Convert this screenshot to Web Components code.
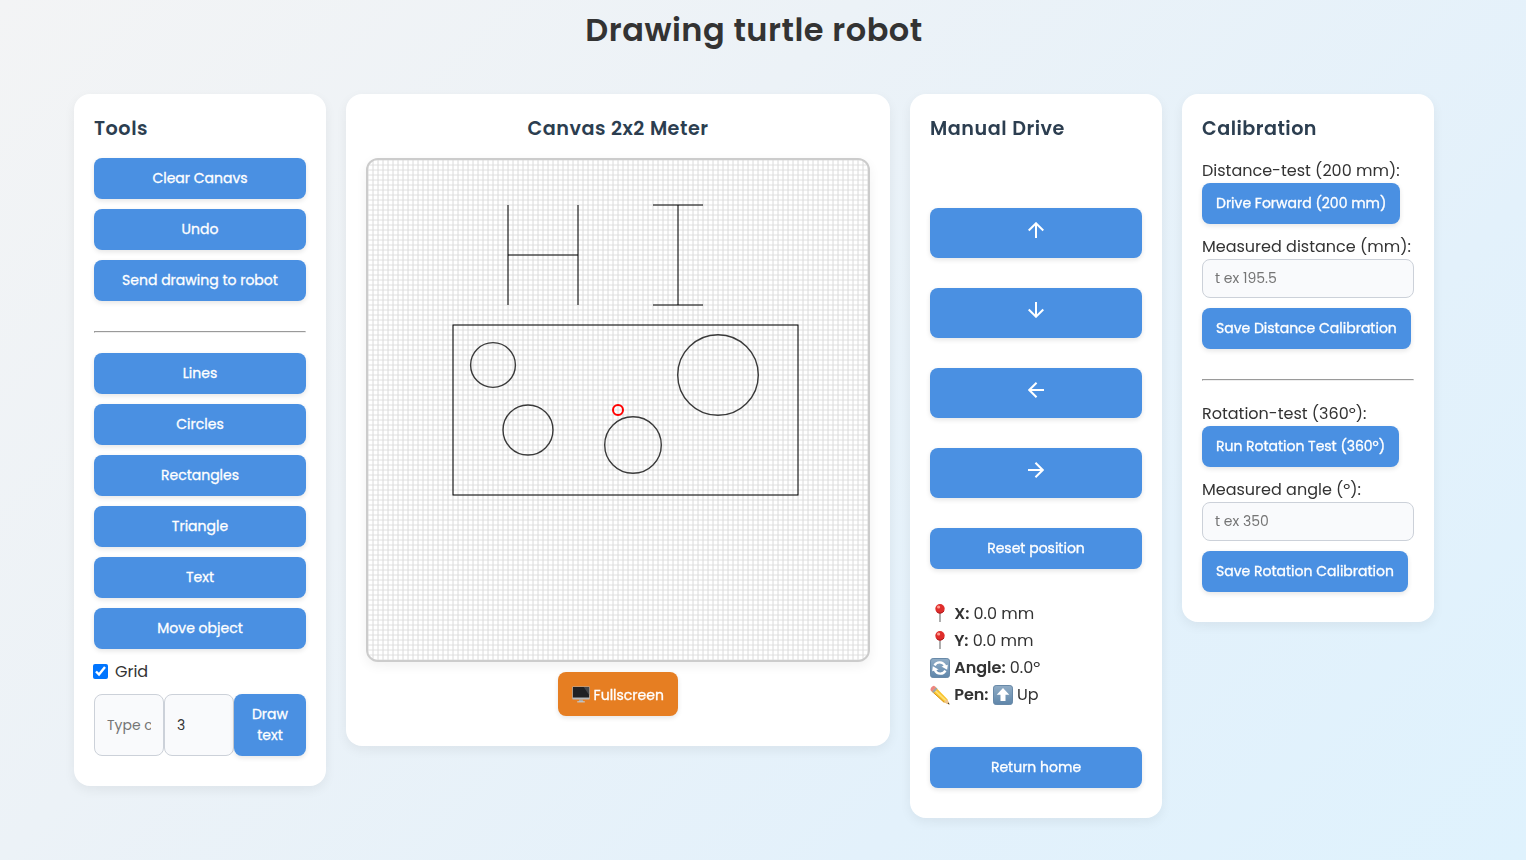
<!DOCTYPE html>
<html lang="en"><head><meta charset="utf-8"><title>Drawing turtle robot</title>
<style>
html{height:100%;overflow:hidden;background:linear-gradient(135deg,#f3f4f5 0%,#ecf2f7 36%,#e3f1fb 72%,#dff2fd 100%)}
body{margin:0;width:1508px;min-height:860px;font:400 16px/24px Poppins,Inter,"Noto Sans",sans-serif;color:#333}
</style></head><body>
<turtle-app></turtle-app>
<script>
const define=(name,html,setup)=>customElements.define(name,class extends HTMLElement{
  connectedCallback(){
    if(this.shadowRoot)return;
    const t=document.createElement('template');t.innerHTML=html;
    this.attachShadow({mode:'open'}).append(t.content.cloneNode(true));
    if(setup)setup(this,this.shadowRoot);
  }
});

/* Single-line text run; an optional w sets its width through tracking. */
define('fit-text','<style>:host{display:inline-block;white-space:nowrap}</style><slot></slot>',el=>{
  if(!el.hasAttribute('w'))return;
  const target=+el.getAttribute('w');
  const ls=(target-el.getBoundingClientRect().width)/el.textContent.length;
  el.style.letterSpacing=ls.toFixed(3)+'px';
});

define('ui-button',`<style>
:host{display:block}
button{display:flex;align-items:center;justify-content:center;width:100%;height:100%;min-height:41px;box-sizing:border-box;border:0;border-radius:8px;padding:10px 14px;background:var(--tone,#4a90e2);color:#fff;font:400 14px/21px Poppins,Inter,"Noto Sans",sans-serif;-webkit-text-stroke:.3px #fff;box-shadow:0 2px 5px rgba(0,0,0,.1)}
</style><button><slot></slot></button>`);

define('ui-card',`<style>
:host{display:block;box-sizing:border-box;background:#fff;border-radius:16px;padding:20px 20px 30px;box-shadow:0 4px 12px rgba(0,0,0,.06)}
h2{margin:0 0 14px;font-size:19.2px;line-height:30px;height:30px;font-weight:600;color:#2c3e50;text-align:var(--align,left)}
</style><h2><slot name="title"></slot></h2><slot></slot>`);

define('ui-rule','<style>:host{display:block;margin:30px 0 20px}hr{margin:0;border:1px solid;border-color:#9a9a9a #eee #eee #9a9a9a}</style><hr>');

define('ui-input',`<style>
:host{display:block}
input{width:100%;height:100%;min-height:39px;box-sizing:border-box;border:1px solid #ccd1d9;border-radius:8px;background:#f9fafc;padding:8px 12px;margin:0;color:#333;font:400 14px/21px Poppins,Inter,"Noto Sans",sans-serif;display:block}
input::placeholder{color:#757575;opacity:1}
</style><input>`,(el,r)=>{const i=r.querySelector('input');i.placeholder=el.getAttribute('placeholder')||'';i.value=el.getAttribute('value')||''});

const svg=(w,h,body)=>`<svg viewBox="0 0 20 20" width="${w}" height="${h}" fill="none">${body}</svg>`;
const tile='<defs><linearGradient id="g" x1="0" y1="0" x2="0" y2="1"><stop stop-color="#91adc6"/><stop offset="1" stop-color="#5f86aa"/></linearGradient></defs><rect x=".5" y=".5" width="19" height="19" rx="2.6" fill="url(#g)" stroke="#6889a8"/>';
const arrow=a=>svg(16,16,`<g transform="rotate(${a} 10 10)" stroke="#fff" stroke-width="2.5"><path d="M10 20V1.8M.9 10.7 10 1.6l9.1 9.1"/></g>`);
const icons={
 up:arrow(0),right:arrow(90),down:arrow(180),left:arrow(270),
 pin:svg(20,20,'<path d="M10 8v10" stroke="#8b8b8b" stroke-width="1.4"/><circle cx="10" cy="4.7" r="4.7" fill="#df2d2b"/><circle cx="8.6" cy="3" r="1.6" fill="#ff9a8f"/><path d="M6.6 7.7a4.7 4.7 0 0 0 7.4-.8" stroke="#a8181c" stroke-width="1"/>'),
 cycle:svg(20,20,tile+'<path d="M4.6 7.4C6.6 3.4 13 3.2 15.2 8M15.4 12.6C13.4 16.6 7 16.8 4.8 12" stroke="#fff" stroke-width="2.4"/><path d="m11.4 8.4 6.4-1.6-.6 5zM8.6 11.6l-6.4 1.6.6-5z" fill="#fff"/>'),
 pencil:svg(20,20,'<path d="M5 1.4 1.1 5.6 14 17.4l5.4 2-2.2-5.5z" fill="#f8c32c"/><path d="m3.2 3.9 12.7 11.8" stroke="#ffe176" stroke-width="1.7"/><path d="M1.4 5.8 14 17.2" stroke="#d8951a"/><path d="m13.9 17.2 3.3-3.3 2.2 5.5z" fill="#edc391"/><path d="m17.6 18.8 1.2-1.2.7 2z" fill="#333"/><path d="M7.5 3.8 3.6 8 2.1 6.6l3.8-4.3z" fill="#9da4aa"/><path d="M5.9 2.3 2.1 6.6.7 5.2C-.4 4 2.8.1 4.3 1z" fill="#ed8581"/>'),
 penup:svg(20,20,tile+'<path d="m10 3 6.3 6.7h-3.8V16h-5V9.7H3.7z" fill="#fff"/>'),
 screen:svg(18,18,'<path d="M8 16h4l.6 3H7.4z" fill="#a5a8ab"/><path d="M5.8 18.7h8.4" stroke="#c8cacc" stroke-width="1.3"/><rect x=".3" y="1.6" width="19.4" height="14.5" rx=".8" fill="#b5b8ba"/><rect x="1" y="2.2" width="18" height="11.7" fill="#202124"/><path d="M13 2.2h6v9z" fill="#44464a"/>')
};
define('ui-icon','<style>:host{display:inline-flex;align-items:center}svg{display:block}</style><span></span>',(el,r)=>{r.querySelector('span').innerHTML=icons[el.getAttribute('name')]});

define('draw-canvas',`<style>
:host{display:block;width:504px;height:504px}
canvas{display:block;border:2px solid #ccc;border-radius:12px;background:#fff;box-shadow:0 4px 12px rgba(0,0,0,.06)}
</style><canvas width="500" height="500"></canvas>`,(el,r)=>{
 const c=r.querySelector('canvas').getContext('2d');
 const seg=(x,y,u,v)=>{c.beginPath();c.moveTo(x,y);c.lineTo(u,v);c.stroke()};
 const ring=(x,y,q)=>{c.beginPath();c.arc(x,y,q,0,Math.PI*2);c.stroke()};
 c.lineWidth=1;
 c.strokeStyle='#e0e0e0';
 for(let i=0;i<=500;i+=5)seg(0,i,500,i);
 c.strokeStyle='#dadada';
 for(let i=0;i<=500;i+=5)seg(i,0,i,500);
 c.strokeStyle='#000';
 seg(140,45,140,145);seg(210,45,210,145);seg(140,95,210,95);
 seg(310,45,310,145);seg(285,45,335,45);seg(285,145,335,145);
 c.strokeRect(85,165,345,170);
 c.strokeStyle='#3a3a3a';c.lineWidth=1.4;
 ring(125,205,22.4);ring(160,270,25);ring(265,285,28.3);ring(350,215,40.3);
 c.strokeStyle='red';c.lineWidth=2;ring(250,250,5);
});

define('tools-panel',`<style>
:host{display:block}.stack{display:grid;gap:10px}
.grid{display:flex;align-items:center;height:24px;margin-top:11px}
input{width:15px;height:15px;margin:-1px 7px 0 -1px}
.row{display:grid;grid-template-columns:70px 70px 72px;height:62px;margin-top:10px}
</style><ui-card><fit-text slot="title" w="54">Tools</fit-text>
<div class="stack"><ui-button><fit-text>Clear Canavs</fit-text></ui-button><ui-button><fit-text>Undo</fit-text></ui-button><ui-button><fit-text>Send drawing to robot</fit-text></ui-button></div>
<ui-rule></ui-rule>
<div class="stack"><ui-button><fit-text>Lines</fit-text></ui-button><ui-button><fit-text>Circles</fit-text></ui-button><ui-button><fit-text>Rectangles</fit-text></ui-button><ui-button><fit-text>Triangle</fit-text></ui-button><ui-button><fit-text>Text</fit-text></ui-button><ui-button><fit-text>Move object</fit-text></ui-button></div>
<label class="grid"><input type="checkbox" checked><fit-text>Grid</fit-text></label>
<div class="row"><ui-input placeholder="Type coordinates"></ui-input><ui-input value="3"></ui-input><ui-button><span><fit-text>Draw</fit-text><br><fit-text>text</fit-text></span></ui-button></div>
</ui-card>`);

define('canvas-panel',`<style>:host{display:block;--align:center}
.full{--tone:#e67e22;width:120px;height:44px;margin:10px auto 0}ui-icon{margin-right:3.5px}.full fit-text{padding-top:2px}
</style><ui-card><fit-text slot="title" w="181">Canvas 2x2 Meter</fit-text><draw-canvas></draw-canvas>
<ui-button class="full"><ui-icon name="screen"></ui-icon><fit-text>Fullscreen</fit-text></ui-button></ui-card>`);

define('drive-panel',`<style>:host{display:block}
.pad{display:grid;gap:30px;padding-top:50px}.arrow{height:50px}.arrow ui-icon{margin-top:-6px}
.info{margin:31px 0 39px;display:grid;grid-auto-rows:27px}.info div{display:flex;align-items:center;gap:4.2px}b{font-weight:600}
</style><ui-card><fit-text slot="title" w="135">Manual Drive</fit-text>
<div class="pad"><ui-button class="arrow"><ui-icon name="up"></ui-icon></ui-button><ui-button class="arrow"><ui-icon name="down"></ui-icon></ui-button><ui-button class="arrow"><ui-icon name="left"></ui-icon></ui-button><ui-button class="arrow"><ui-icon name="right"></ui-icon></ui-button><ui-button><fit-text>Reset position</fit-text></ui-button></div>
<div class="info"><div><ui-icon name="pin"></ui-icon><b><fit-text>X:</fit-text></b><fit-text>0.0 mm</fit-text></div>
<div><ui-icon name="pin"></ui-icon><b><fit-text>Y:</fit-text></b><fit-text>0.0 mm</fit-text></div>
<div><ui-icon name="cycle"></ui-icon><b><fit-text>Angle:</fit-text></b><fit-text>0.0º</fit-text></div>
<div><ui-icon name="pencil"></ui-icon><b><fit-text>Pen:</fit-text></b><ui-icon name="penup"></ui-icon><fit-text>Up</fit-text></div></div>
<ui-button><fit-text>Return home</fit-text></ui-button></ui-card>`);

define('calibration-panel',`<style>:host{display:block}.l{height:24px;margin-top:11px}.first{margin-top:15px}.b{width:fit-content}ui-input{margin:0 0 10px}.r{margin-top:21px;height:24px}
</style><ui-card><fit-text slot="title" w="115">Calibration</fit-text>
<div class="l first"><fit-text>Distance-test (200 mm):</fit-text></div><ui-button class="b"><fit-text>Drive Forward (200 mm)</fit-text></ui-button>
<div class="l"><fit-text>Measured distance (mm):</fit-text></div><ui-input placeholder="t ex 195.5"></ui-input><ui-button class="b"><fit-text>Save Distance Calibration</fit-text></ui-button>
<ui-rule></ui-rule>
<div class="l r"><fit-text>Rotation-test (360º):</fit-text></div><ui-button class="b"><fit-text w="169">Run Rotation Test (360º)</fit-text></ui-button>
<div class="l"><fit-text>Measured angle (º):</fit-text></div><ui-input placeholder="t ex 350"></ui-input><ui-button class="b"><fit-text>Save Rotation Calibration</fit-text></ui-button></ui-card>`);

define('turtle-app',`<style>:host{display:block}
h1{margin:0;height:94px;box-sizing:border-box;padding-top:5px;text-align:center;font-size:32px;line-height:50px;font-weight:600;color:#333}
main{display:grid;grid-template-columns:252px 544px 252px 252px;gap:20px;justify-content:center;align-items:start}
</style><h1><fit-text w="337.5">Drawing turtle robot</fit-text></h1>
<main><tools-panel></tools-panel><canvas-panel></canvas-panel><drive-panel></drive-panel><calibration-panel></calibration-panel></main>`);
</script></body></html>
